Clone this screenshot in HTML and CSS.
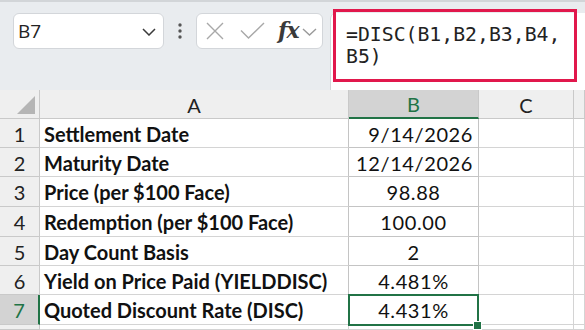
FILE: index.html
```html
<!DOCTYPE html>
<html>
<head>
<meta charset="utf-8">
<link rel="stylesheet" href="styles.css">
</head>
<body>
<div class="toolbar">
  <div class="namebox">
    <span class="name">B7</span>
    <svg class="chev" width="14" height="8" viewBox="0 0 14 8"><path d="M1 1l6 6 6-6" stroke="#3a3a3a" stroke-width="1.5" fill="none"/></svg>
  </div>
  <div class="dots">
    <svg width="4" height="16" viewBox="0 0 4 16"><circle cx="2" cy="2" r="1.7" fill="#555"/><circle cx="2" cy="8" r="1.7" fill="#555"/><circle cx="2" cy="14" r="1.7" fill="#555"/></svg>
  </div>
  <div class="fnbox">
    <svg class="ico-x" width="18" height="18" viewBox="0 0 18 18"><path d="M1 1L17 17M17 1L1 17" stroke="#a8a8a8" stroke-width="1.4" fill="none"/></svg>
    <svg class="ico-check" width="25" height="18" viewBox="0 0 25 18"><path d="M1 8.5L8.5 16L24 1" stroke="#a8a8a8" stroke-width="1.4" fill="none"/></svg>
    <span class="fx">fx</span>
    <svg class="chev-sm" width="15" height="8" viewBox="0 0 15 8"><path d="M1 1l6.5 6 6.5-6" stroke="#9a9a9a" stroke-width="1.4" fill="none"/></svg>
  </div>
  <div class="formula-bar">
    <div class="formula-text">=DISC(B1,B2,B3,B4,<br>B5)</div>
    <div class="highlight"></div>
  </div>
</div>
<div class="sheet">
  <div class="hd corner"><span class="tri"></span></div>
  <div class="hd col">A</div>
  <div class="hd col sel-col">B</div>
  <div class="hd col">C</div>
  <div class="hd col"></div>

  <div class="hd rn">1</div><div class="c a">Settlement Date</div><div class="c b r">9/14/2026</div><div class="c"></div><div class="c"></div>
  <div class="hd rn">2</div><div class="c a">Maturity Date</div><div class="c b r">12/14/2026</div><div class="c"></div><div class="c"></div>
  <div class="hd rn">3</div><div class="c a">Price (per $100 Face)</div><div class="c b">98.88</div><div class="c"></div><div class="c"></div>
  <div class="hd rn">4</div><div class="c a">Redemption (per $100 Face)</div><div class="c b">100.00</div><div class="c"></div><div class="c"></div>
  <div class="hd rn">5</div><div class="c a">Day Count Basis</div><div class="c b">2</div><div class="c"></div><div class="c"></div>
  <div class="hd rn">6</div><div class="c a">Yield on Price Paid (YIELDDISC)</div><div class="c b">4.481%</div><div class="c"></div><div class="c"></div>
  <div class="hd rn sel-row">7</div><div class="c a">Quoted Discount Rate (DISC)</div><div class="c b active">4.431%<span class="handle"></span></div><div class="c"></div><div class="c"></div>
  <div class="hd rn"></div><div class="c"></div><div class="c"></div><div class="c"></div><div class="c"></div>
</div>
</body>
</html>
```
FILE: styles.css
```css
html, body {
  margin: 0;
  padding: 0;
}
body {
  width: 585px;
  height: 330px;
  overflow: hidden;
  background: #ffffff;
  font-family: "Lato", "Open Sans", sans-serif;
}
.toolbar {
  height: 90px;
  box-sizing: border-box;
  background: #e9ecef;
  border-top: 2px solid #d2d5d8;
  display: flex;
  align-items: flex-start;
  padding: 11px 0 0 13px;
}
.namebox {
  width: 151px;
  height: 36px;
  box-sizing: border-box;
  background: #fff;
  border: 1px solid #d3d6da;
  border-radius: 6px;
  display: flex;
  align-items: center;
  padding: 0 6px 0 4px;
}
.name {
  font-family: "Open Sans", sans-serif;
  font-size: 19px;
  color: #222;
  flex: 1;
  margin-top: -1px;
}
.chev { margin-top: 1px; margin-right: 1px; }
.dots {
  width: 32px;
  height: 36px;
  display: flex;
  align-items: center;
  justify-content: center;
}
.fnbox {
  width: 127px;
  height: 36px;
  box-sizing: border-box;
  background: #fff;
  border: 1px solid #d3d6da;
  border-radius: 6px;
  display: flex;
  align-items: center;
  padding-left: 9px;
}
.ico-check { margin-left: 16px; margin-top: -1px; }
.fx {
  font-family: "DejaVu Serif", "Liberation Serif", serif;
  font-style: italic;
  font-weight: bold;
  font-size: 22px;
  color: #3a3a3a;
  margin-left: 13px;
  margin-top: -2px;
  letter-spacing: -1px;
}
.chev-sm { margin-left: 3px; margin-top: 1px; }
.formula-bar {
  position: relative;
  flex: 1;
  margin-left: 7px;
  height: 77px;
  background: #fff;
  border-radius: 6px 0 0 0;
  border-left: 1px solid #d3d6da;
}
.formula-text {
  font-family: "DejaVu Sans Mono", "Liberation Mono", monospace;
  font-size: 19.8px;
  line-height: 22px;
  color: #222;
  padding: 11px 0 0 15px;
}
.highlight {
  position: absolute;
  left: 2px;
  top: -4px;
  width: 244px;
  height: 73px;
  box-sizing: border-box;
  border: 3px solid #e1184c;
}
.sheet {
  display: grid;
  grid-template-columns: 40px 309px 130px 95px 1fr;
  grid-template-rows: 29px 29px 29px 30px 30px 29px 29px 30px 1fr;
  height: 240px;
}
.hd {
  background: #efefef;
  border-right: 1px solid #c9c9c9;
  border-bottom: 1px solid #c9c9c9;
  box-sizing: border-box;
  display: flex;
  align-items: center;
  justify-content: center;
  font-size: 20px;
  color: #222;
  padding-top: 1px;
}
.corner {
  position: relative;
}
.tri {
  position: absolute;
  right: 4px;
  bottom: 4px;
  width: 0;
  height: 0;
  border-left: 18px solid transparent;
  border-bottom: 18px solid #b5b5b5;
}
.sel-col {
  background: #d3d3d3;
  color: #217346;
  border-bottom: 2px solid #217346;
}
.sel-row {
  background: #d3d3d3;
  color: #217346;
  border-right: 2px solid #217346;
}
.c {
  border-right: 1px solid #d4d4d4;
  border-bottom: 1px solid #d4d4d4;
  box-sizing: border-box;
  display: flex;
  align-items: center;
  font-size: 20px;
  color: #111;
  padding-top: 1px;
  white-space: nowrap;
}
.a {
  font-weight: bold;
  padding-left: 4px;
  border-right-color: #c4c4c4;
}
.b {
  justify-content: center;
  letter-spacing: 0.6px;
  border-right-color: #c4c4c4;
  border-bottom-color: #c4c4c4;
}
.b.r {
  justify-content: flex-end;
  padding-right: 5px;
}
.active {
  position: relative;
}
.active::before {
  content: "";
  position: absolute;
  left: -1px;
  top: -1px;
  right: -1px;
  bottom: -2px;
  border: 2px solid #217346;
}
.handle {
  position: absolute;
  right: -4px;
  bottom: -6px;
  width: 7px;
  height: 7px;
  background: #217346;
  border: 1px solid #fff;
}
```
